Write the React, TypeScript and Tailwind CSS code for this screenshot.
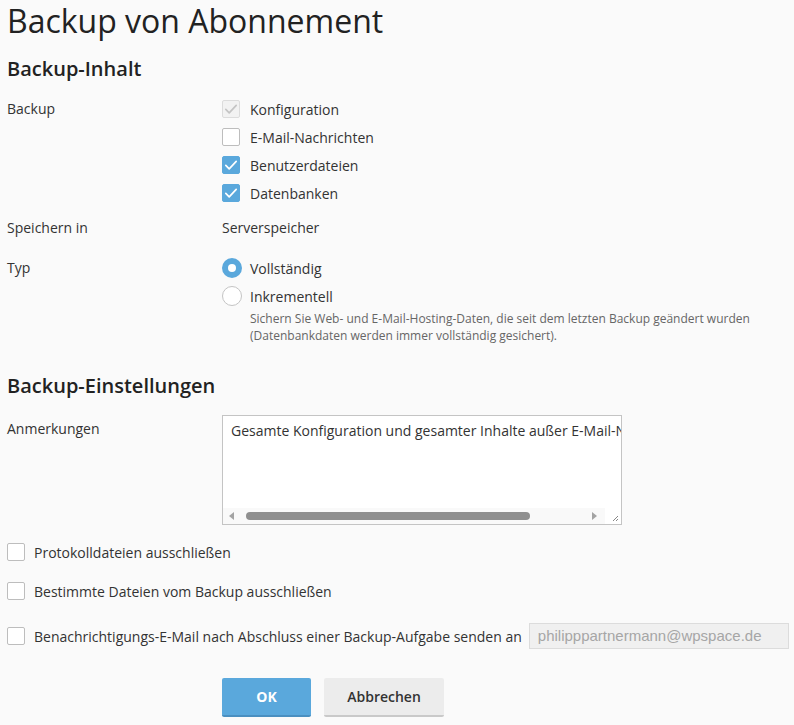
import React from "react";

const font = "font-['Open_Sans',_'Liberation_Sans',_sans-serif]";

function Checkbox({ checked = false, disabled = false }: { checked?: boolean; disabled?: boolean }) {
  const base = "flex h-[18px] w-[18px] shrink-0 items-center justify-center rounded-[2px] border";
  const cls = disabled
    ? "border-[#dcdcdc] bg-[#f2f2f2]"
    : checked
      ? "border-[#5aa8dc] bg-[#5aa8dc]"
      : "border-[#bdbdbd] bg-white";
  return (
    <span className={`${base} ${cls}`}>
      {checked && (
        <svg viewBox="0 0 16 16" className="h-[16px] w-[16px]" fill="none">
          <path
            d="M2.8 8.4l3.4 3.4L13.2 4.4"
            stroke={disabled ? "#c4c4c4" : "#ffffff"}
            strokeWidth="1.7"
            strokeLinecap="round"
            strokeLinejoin="round"
          />
        </svg>
      )}
    </span>
  );
}

function Radio({ checked = false }: { checked?: boolean }) {
  return checked ? (
    <span className="flex h-[20px] w-[20px] shrink-0 items-center justify-center rounded-full bg-[#5aa8dc]">
      <span className="h-[8px] w-[8px] rounded-full bg-white" />
    </span>
  ) : (
    <span className="h-[20px] w-[20px] shrink-0 rounded-full border border-[#c4c4c4] bg-white" />
  );
}

function CheckRow({
  label,
  checked,
  disabled,
}: {
  label: string;
  checked?: boolean;
  disabled?: boolean;
}) {
  return (
    <label className="flex h-[28px] items-center gap-[10px]">
      <Checkbox checked={checked} disabled={disabled} />
      <span>{label}</span>
    </label>
  );
}

export default function App() {
  return (
    <div className={`min-h-[725px] w-[794px] bg-[#fafafa] pl-[7px] text-[14px] text-[#333] ${font}`}>
      <h1 className="pt-[1px] text-[32px] leading-[40px] font-normal text-[#222]">
        Backup von Abonnement
      </h1>

      <h2 className="mt-[14px] h-[28px] text-[20px] leading-[28px] font-semibold text-[#222]">
        Backup-Inhalt
      </h2>

      <div className="mt-[12px] grid grid-cols-[215px_1fr]">
        <div className="leading-[28px]">Backup</div>
        <div className="flex flex-col">
          <CheckRow label="Konfiguration" checked disabled />
          <CheckRow label="E-Mail-Nachrichten" />
          <CheckRow label="Benutzerdateien" checked />
          <CheckRow label="Datenbanken" checked />
        </div>

        <div className="mt-[7px] leading-[28px]">Speichern in</div>
        <div className="mt-[7px] leading-[28px]">Serverspeicher</div>

        <div className="mt-[12px] leading-[28px]">Typ</div>
        <div className="mt-[12px] flex flex-col">
          <label className="flex h-[28px] items-center gap-[8px]">
            <Radio checked />
            <span>Vollständig</span>
          </label>
          <label className="flex h-[28px] items-center gap-[8px]">
            <Radio />
            <span>Inkrementell</span>
          </label>
          <p className="pl-[28px] text-[12px] leading-[17px] text-[#666]">
            Sichern Sie Web- und E-Mail-Hosting-Daten, die seit dem letzten Backup geändert wurden
            <br />
            (Datenbankdaten werden immer vollständig gesichert).
          </p>
        </div>
      </div>

      <h2 className="mt-[28px] h-[28px] text-[20px] leading-[28px] font-semibold text-[#222]">
        Backup-Einstellungen
      </h2>

      <div className="mt-[15px] grid grid-cols-[215px_1fr]">
        <div className="leading-[28px]">Anmerkungen</div>
        <div className="flex h-[110px] w-[400px] flex-col border border-[#c4c4c4] bg-white">
          <div className="flex-1 overflow-hidden whitespace-nowrap px-[8px] pt-[3px] leading-[24px]">
            Gesamte Konfiguration und gesamter Inhalte außer E-Mail-Nachrichten
          </div>
          <div className="flex h-[16px] items-center bg-[#f9f9f9]">
            <span className="ml-[6px] h-0 w-0 border-y-[4px] border-r-[5px] border-y-transparent border-r-[#a3a3a3]" />
            <span className="ml-[12px] h-[8px] w-[284px] rounded-full bg-[#8f8f8f]" />
            <span className="ml-auto mr-[8px] h-0 w-0 border-y-[4px] border-l-[5px] border-y-transparent border-l-[#a3a3a3]" />
            <span className="flex h-[16px] w-[16px] items-end justify-end bg-white">
              <svg viewBox="0 0 16 16" className="h-[16px] w-[16px]">
                <path d="M13 8L8 13M13 11L11 13" stroke="#888" strokeWidth="1" />
              </svg>
            </span>
          </div>
        </div>
      </div>

      <div className="mt-[13px] flex flex-col">
        <label className="flex h-[28px] items-center gap-[9px]">
          <Checkbox />
          <span>Protokolldateien ausschließen</span>
        </label>
        <label className="mt-[11px] flex h-[28px] items-center gap-[9px]">
          <Checkbox />
          <span>Bestimmte Dateien vom Backup ausschließen</span>
        </label>
        <label className="mt-[17px] flex h-[28px] items-center gap-[9px]">
          <Checkbox />
          <span>Benachrichtigungs-E-Mail nach Abschluss einer Backup-Aufgabe senden an</span>
          <span className="ml-[-2px] flex h-[26px] w-[260px] items-center border border-[#dcdcdc] bg-[#f0f0f0] px-[8px] font-['Liberation_Sans',_Arial,_sans-serif] text-[15px] text-[#a6a6a6]">
            philipppartnermann@wpspace.de
          </span>
        </label>
      </div>

      <div className="mt-[28px] flex gap-[13px] pl-[215px]">
        <button className="h-[39px] w-[89px] rounded-[2px] border-b-2 border-[#4a8fc0] bg-[#5aa8dc] text-[14px] font-bold text-white">
          OK
        </button>
        <button className="h-[39px] w-[120px] rounded-[2px] border-b-2 border-[#c9c9c9] bg-[#ececec] text-[14px] font-semibold text-[#333]">
          Abbrechen
        </button>
      </div>
    </div>
  );
}
